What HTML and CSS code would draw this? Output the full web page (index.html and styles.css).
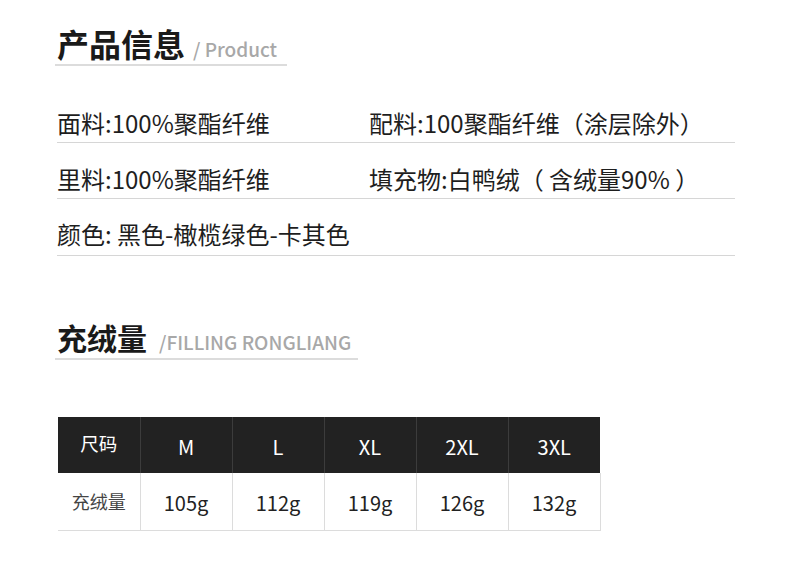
FILE: index.html
```html
<!DOCTYPE html>
<html lang="zh">
<head>
<meta charset="utf-8">
<link rel="stylesheet" href="styles.css">
</head>
<body>
<div class="page">
  <div class="heading h1">
    <span class="title">产品信息</span><span class="sub">/ Product</span>
  </div>
  <div class="info">
    <div class="row">
      <span class="c1">面料:100%聚酯纤维</span><span class="c2">配料:100聚酯纤维（涂层除外）</span>
    </div>
    <div class="row">
      <span class="c1">里料:100%聚酯纤维</span><span class="c2">填充物:白鸭绒（ 含绒量90% ）</span>
    </div>
    <div class="row">
      <span class="c1">颜色: 黑色-橄榄绿色-卡其色</span>
    </div>
  </div>
  <div class="heading h2">
    <span class="title">充绒量</span><span class="sub">/FILLING RONGLIANG</span>
  </div>
  <table class="size">
    <tr class="head">
      <td class="first">尺码</td><td>M</td><td>L</td><td>XL</td><td>2XL</td><td>3XL</td>
    </tr>
    <tr class="body">
      <td class="first">充绒量</td><td>105g</td><td>112g</td><td>119g</td><td>126g</td><td>132g</td>
    </tr>
  </table>
</div>
</body>
</html>
```
FILE: styles.css
```css
* { box-sizing: border-box; }
html, body { margin: 0; padding: 0; background: #fff; }
body {
  font-family: "Noto Sans CJK SC", "Noto Sans", sans-serif;
  color: #1e1e1e;
  width: 790px;
  height: 579px;
  overflow: hidden;
}
.page { padding: 21px 0 0 55px; }
.heading {
  display: flex;
  align-items: baseline;
  border-bottom: 2px solid #dcdcdc;
  padding: 0 5px 0 2px;
  height: 45px;
}
.heading .title {
  font-size: 32px;
  font-weight: 700;
  line-height: 44px;
  color: #1a1a1a;
}
.heading .sub {
  font-size: 19px;
  font-weight: 500;
  color: #a8a8a8;
  margin-left: 8px;
}
.h1 { width: 232px; }
.h2 { width: 303px; margin-top: 59px; }
.h2 .title { font-size: 30px; }
.h2 .sub { margin-left: 12px; font-size: 19px; }
.info { margin-top: 21px; margin-left: 2px; width: 678px; }
.row {
  display: flex;
  height: 56px;
  padding-top: 21px;
  border-bottom: 1px solid #d6d6d6;
  font-size: 24px;
  line-height: 30px;
  color: #1e1e1e;
}
.row:last-child { height: 57px; padding-top: 20px; }
.c1 { width: 312px; }
.size {
  margin-top: 57px;
  margin-left: 3px;
  border-collapse: collapse;
  table-layout: fixed;
  width: 541px;
}
.size td {
  width: 92px;
  text-align: center;
  padding: 0;
}
.size td.first { width: 82px; }
.head td {
  background: #222;
  color: #fff;
  height: 56px;
  font-size: 20px;
  border-left: 1px solid #3c3c3c;
  padding-top: 2px;
}
.head td.first { border-left: none; font-size: 18.5px; padding-top: 0; padding-bottom: 4px; }
.body td {
  height: 57px;
  font-size: 20px;
  color: #222;
  border-left: 1px solid #dcdcdc;
  border-bottom: 1px solid #dcdcdc;
  padding-top: 2px;
}
.body td.first { border-left: none; font-size: 18px; color: #444; padding-top: 0; }
.body td:last-child { border-right: 1px solid #dcdcdc; }
```
